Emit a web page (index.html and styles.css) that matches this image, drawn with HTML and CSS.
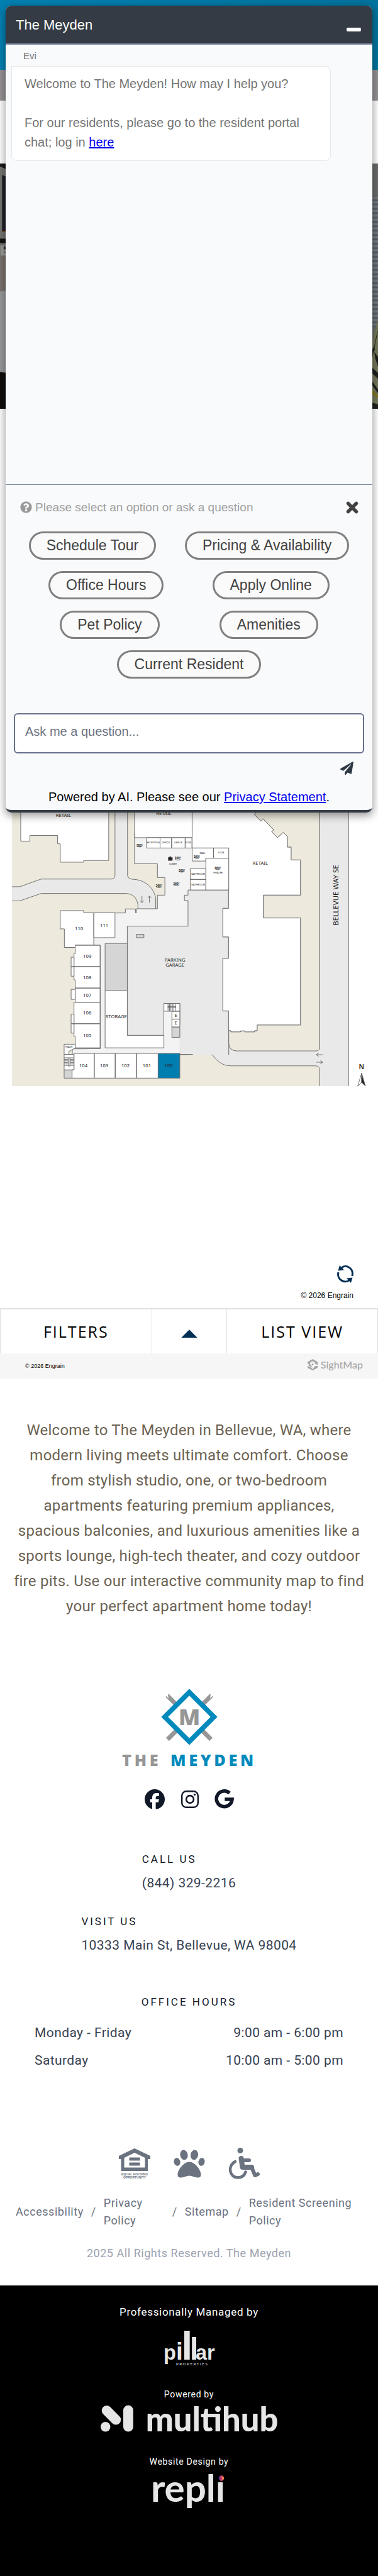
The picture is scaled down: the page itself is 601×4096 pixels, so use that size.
FILE: index.html
```html
<!DOCTYPE html>
<html lang="en">
<head>
<meta charset="utf-8">
<meta name="viewport" content="width=device-width, initial-scale=1">
<title>The Meyden</title>
<link rel="stylesheet" href="styles.css">
</head>
<body>
<header>
  <div class="brand-bar"></div>
  <div class="notice-bar"></div>
  <div class="nav-bar"></div>
</header>

<main>
  <div class="hero">
    <svg class="hero-edge" viewBox="0 0 12 506" preserveAspectRatio="none" aria-hidden="true">
      <rect width="12" height="506" fill="#73736f"/>
      <path d="M0 0h12v12L0 6z" fill="#181818"/>
      <path d="M4 24l8 3v114H4z" fill="#1f2128"/>
      <path d="M4 139h8v2H4z" fill="#8a5a1c"/>
      <path d="M0 155h12v9H0z" fill="#131412"/>
      <path d="M1 169h11v21H1z" fill="#9b9b98"/>
      <path d="M7 171h5v6H7zM8 182h2v2H8z" fill="#30343c"/>
      <path d="M0 192h12v71H0z" fill="#7a726e"/>
      <path d="M0 264l12-2v170l-12-2z" fill="#989a9b"/>
      <path d="M0 430l12 2v74H0z" fill="#0f0e0c"/>
    </svg>
    <svg class="hero-edge" viewBox="0 0 12 506" preserveAspectRatio="none" aria-hidden="true">
      <defs>
        <pattern id="blinds" width="12" height="9" patternUnits="userSpaceOnUse">
          <rect width="12" height="9" fill="#747b80"/>
          <path d="M0 2h12v3H0z" fill="#54595d"/>
        </pattern>
      </defs>
      <rect width="12" height="506" fill="#6a6c6b"/>
      <rect y="68" width="12" height="270" fill="url(#blinds)"/>
      <path d="M12 320L0 372v134h12z" fill="#75795a"/>
      <path d="M0 385l5-8 1 7-6 12zM12 345L1 402v-6L10 350zM5 389l7 10v20l-5-16zM0 420l12 12v12L0 432zM0 448l12 18v8L0 456zM0 493l12 4v9H0z" fill="#1d201c"/>
      <path d="M0 466l12 14v4L0 473z" fill="#86760c"/>
    </svg>
  </div>

  <section class="sitemap" aria-label="Community map">
    <svg class="floor" viewBox="0 0 780 620" role="img" aria-label="Floor 1 plan">
      <g class="plan" transform="scale(.49744 .39541)">
        <path class="land" stroke="none" d="M50 0H1326V1520H50z"/>
        <path class="road" stroke="none" d="M1326 0h120v1520h-120z"/>
        <path fill="none" d="M1446 0v1520M1326 0V1320q-2 14-16 14H980q-30-2-31-38V1230"/>
        <path class="road" stroke="none" d="M746 500h203v796q2 36 31 38h346v80H955c-36-2-56-28-72-55q-4-5-12-5H746z"/>
        <path fill="none" d="M949 1230v66q2 36 31 38h330q14 0 16-14M746 1354h125q8 0 12 5c16 27 36 53 72 55h355q14 2 16 16v90"/>
        <path class="road" stroke="none" d="M477 0h52v420q2 18 20 20c60 2 96 56 97 110v44h-74q4-78-40-80H171L82 553H50v-74h32l89-40h290q14 0 16-16z"/>
        <path fill="none" d="M477 0v423q-2 16-16 16H171l-89 40H50M529 0v420q2 18 20 20c60 2 96 56 97 110v44M50 553h32l89-39h355q40 6 46 56v24"/>
        <path class="room" d="M86 0v241h38v-29h115v43h11v96h97v-9h104V0z"/>
        <path class="hall" d="M558 200v159h95v72h31v92h-31v71h-87v21h-4v-20h-42v21h-131v168h27v540h-56v1h-60v30h480v-660h205V200z"/>
        <path class="road" d="M780 496h169v96h-24v149h24v112h-24v275h24v226H746V1088h-66v167H528V685h252V551h-15v-28h15z"/>
        <path class="road" stroke="none" d="M744 1200h60v152h-57zM800 1220h147v136H800z"/>
        <path class="hall" stroke="none" d="M681 1129h65v219h-65z"/>
        <path class="room" d="M558 0h239v223H558zM797 0H1090l-34 103 26 33 9-12 45 58-9 10 24 31 24-28 17 21v56h16v67h39v184h-154v119h154v559h-180v30h-11v6h-40v-5h-18v5h-40v-6h-10v-104h-24V853h24V741h-24V592h24V277H797z"/>
        <path class="land" d="M1062 0l-2 92-4 11 26 33 9-12 45 58-9 10 24 31 24-28 17 21v56h16v67h39v184h-154v119h154v559h-180v30h-11v6h-40v-5h-18v5h-40v-6h-9v67q2 36 31 38h330q14 0 16-14V0z" />
        <path class="room" d="M608 223h56v54h-56zM664 223h48v54h-48zM712 223h56v54h-56zM768 223h28v54h-28zM797 277h89v53h-32v15h-57zM886 277h63v53h-63zM854 330h95v166h-95zM789 385h65v56h-65zM789 441h65v55h-65z"/>
        <path class="room" d="M250 604h97v11h42v168h-77v13h-45v-97h-17zM389 615h88v130h-88z"/>
        <path class="room" d="M312 785h103v111H307v-68h5zM307 896h108v112H312v-43h-5zM312 1008h103v74H312zM307 1082h108v112H307zM307 1194h108v126H312v-60h-5zM295 847h12v49h-12zM295 896h12v50h-12zM295 1015h17v52h-17zM295 1144h12v50h-12zM295 1194h12v49h-12z"/>
        <path class="shaft" d="M436 775h92v245h-92zM566 727h31v18h-31zM713 1211h33v54h-33zM266 1435h33v43h-33z"/>
        <path class="room" d="M436 1020h92v235h152v65H436z"/>
        <path class="room" d="M680 1088h66v41h-66zM713 1129h33v41h-33zM713 1170h33v41h-33z"/>
        <path class="room" d="M266 1301h46v20l-26 17v16h-20zM266 1354h41v81h-41zM307 1349h84v129h-92v-43h8zM391 1349h87v129h-87zM478 1349h88v129h-88zM566 1349h90v129h-90z"/>
        <path fill="#007eb0" d="M656 1349h90v129h-90z"/>
        <path fill="none" d="M266 1372h18M266 1380h18M266 1388h18M266 1396h18M266 1404h18M266 1412h18M290 1372h16M290 1380h16M290 1388h16M290 1396h16M290 1404h16M290 1412h16M283 1372h7v43h-7zM697 1088v40M703 1088v40M709 1088v40M715 1088v40M721 1088v40M727 1088v40M697 1104h32v7h-32z"/>
        <path fill="none" d="M589 528v34l-7-9M589 562l7-9M620 562v-34l-7 9M620 528l7 9M1338 1356h-26l10-8M1312 1356l10 8M1312 1395h27l-10-8M1339 1395l-10 8"/>
        <path class="ink" d="M698 326h4l2-4h5l2 4h4v16h-17z"/>
        <path fill="#fff" stroke="none" d="M1500 1452l-16 68 16-20z"/>
        <path fill="none" d="M1500 1452l-16 68 16-20z"/>
        <path class="ink" d="M1500 1452l16 68-16-20z"/>
      </g>
      <g class="plan-label">
        <g class="unit">
          <text x="131" y="45">RETAIL</text><text x="338" y="42">RETAIL</text><text x="537" y="144">RETAIL</text>
          <text x="163" y="279">110</text><text x="215" y="273">111</text><text x="180" y="336">109</text><text x="180" y="380">108</text>
          <text x="180" y="417">107</text><text x="180" y="453">106</text><text x="180" y="500">105</text><text x="172" y="562">104</text>
          <text x="215" y="562">103</text><text x="259" y="562">102</text><text x="303" y="562">101</text><text x="348" y="562">100</text>
          <text x="361" y="344">PARKING</text><text x="361" y="354">GARAGE</text><text x="240" y="461">STORAGE</text>
          <text x="363" y="458">E</text><text x="363" y="474">E</text>
        </g>
        <g class="small">
          <text x="316" y="100">RECEPTION</text><text x="342" y="100">OFFICE</text><text x="368" y="100">OFFICE</text><text x="388" y="100">STOR</text>
          <text x="418" y="122">MAIL</text><text x="456" y="121">STOR</text><text x="357" y="144">LOBBY</text><text x="449" y="162">THEATER</text>
          <text x="409" y="165">BATHROOM</text><text x="409" y="187">BATHROOM</text><text x="142" y="522">TRASH</text>
        </g>
        <g class="tour">
          <text x="288" y="106">360°</text><text x="367" y="133">360°</text><text x="406" y="130">360°</text><text x="449" y="153">360°</text>
          <text x="375" y="158">360°</text><text x="364" y="186">360°</text><text x="328" y="190">360°</text>
        </g>
        <g class="orbit">
          <path d="M282 105q6 5 12 0M361 132q6 5 12 0M400 129q6 5 12 0M443 152q6 5 12 0M369 157q6 5 12 0M358 185q6 5 12 0M322 189q6 5 12 0"/>
        </g>
        <text class="street" transform="translate(698 207) rotate(-90)">BELLEVUE WAY SE</text>
        <text class="north" x="746" y="566">N</text>
      </g>
    </svg>
    <div class="map-controls">
      <button class="icon-btn" aria-label="Reset map">
        <svg width="26" height="30" viewBox="0 0 26 30" fill="none" stroke="#002f56" stroke-width="3">
          <path d="M2 12C-1 24 13 31 20 24M24 18C27 6 14-2 7 5"/>
          <path d="M4 1l7 7.500-9.500 1zM22 29l-7-7.500 9.500-1z" fill="#002f56" stroke="none"/>
        </svg>
      </button>
      <small>© 2026 Engrain</small>
    </div>
    <div class="map-tabs">
      <button>FILTERS</button>
      <button aria-label="Expand"><span class="triangle"></span></button>
      <button>LIST VIEW</button>
    </div>
    <div class="map-credit">
      <span>© 2026 Engrain</span>
      <a class="sightmap" href="#">
        <svg width="16" height="18" viewBox="0 0 16 18"><path fill="#a5a5a5" d="M8 0l8 4.500v5L12 7.500A4 4 0 0 0 4 8l4 6-7-4 2-1-3-2v-2.500zM16 11v3l-8 4-8-4v-3l5 2 3 3 4-5z"/><circle cx="8" cy="8.500" r="1.600" fill="#a5a5a5"/></svg>
        SightMap
      </a>
    </div>
  </section>

  <p class="intro">Welcome to The Meyden in Bellevue, WA, where modern living meets ultimate comfort. Choose from stylish studio, one, or two-bedroom apartments featuring premium appliances, spacious balconies, and luxurious amenities like a sports lounge, high-tech theater, and cozy outdoor fire pits. Use our interactive community map to find your perfect apartment home today!</p>
</main>

<footer>
  <div class="contact">
    <a href="#" aria-label="The Meyden home">
      <svg class="logo" width="214" height="130" viewBox="0 0 278 169">
        <g stroke="#969696" stroke-width="9"><path d="M93 14l91 91M185 14l-91 91"/></g>
        <path fill="#fff" d="M85 9l10 3 1 8zM193 9l-10 3-1 8z"/>
        <path d="M139 7.500l51 51-51 51-51-51z" fill="#fff" stroke="#0089bc" stroke-width="10"/>
        <text x="139" y="75" text-anchor="middle" font-size="46" fill="#969696">M</text>
        <text x="0" y="160" font-size="33" letter-spacing="6" fill="#969696">THE</text>
        <text x="100" y="160" font-size="33" letter-spacing="6" fill="#0089bc">MEYDEN</text>
      </svg>
    </a>
    <nav class="social" aria-label="Social media">
      <a href="#" aria-label="Facebook"><svg width="32" height="32" viewBox="0 0 24 24"><path fill="#111827" d="M24 12a12 12 0 1 0-15 11.650V15.600H6.500V12H9v-1.600C9 6.400 10.800 4.500 14.700 4.500c.8 0 2 .15 2.500.3v3.300h-1.400c-1.900 0-2.600.7-2.600 2.600V12h3.900l-.7 3.600h-3.200v8.300A12 12 0 0 0 24 12z"/></svg></a>
      <a href="#" aria-label="Instagram"><svg width="28" height="28" viewBox="0 0 28 28" fill="none" stroke="#111827"><rect x="1.200" y="1.200" width="25.600" height="25.600" rx="7" stroke-width="2.400"/><circle cx="14" cy="14" r="5.900" stroke-width="2.600"/><circle cx="21.500" cy="6.600" r="1.700" fill="#111827" stroke="none"/></svg></a>
      <a href="#" aria-label="Google"><svg width="30" height="31" viewBox="0 0 30 31" fill="none" stroke="#111827" stroke-width="5.600"><path d="M23 6.100A12.400 12.400 0 1 0 27 16H15.300"/></svg></a>
    </nav>
    <div class="contact-block">
      <h2>CALL US</h2>
      <a href="#">(844) 329-2216</a>
    </div>
    <div class="contact-block">
      <h2>VISIT US</h2>
      <a href="#">10333 Main St, Bellevue, WA 98004</a>
    </div>
    <h2 class="hours-title">OFFICE HOURS</h2>
    <dl class="hours">
      <div><dt>Monday - Friday</dt><dd>9:00 am - 6:00 pm</dd></div>
      <div><dt>Saturday</dt><dd>10:00 am - 5:00 pm</dd></div>
    </dl>
  </div>

  <div class="legal">
    <div class="badges">
      <svg width="50" height="50" viewBox="0 0 50 50" fill="#6b7280" role="img" aria-label="Equal housing opportunity">
        <path fill-rule="evenodd" d="M25 1l25 12v5h-4v19H3.500V18H0v-5zM25 8L8.500 16v15.500h33V16z"/>
        <path d="M16.500 15.500h17v5h-17zM16.500 23.500h17v5h-17z"/>
        <text x="25" y="44" text-anchor="middle" font-size="5">EQUAL HOUSING</text>
        <text x="25" y="49" text-anchor="middle" font-size="5">OPPORTUNITY</text>
      </svg>
      <svg width="50" height="50" viewBox="0 0 50 50" fill="#6b7280" role="img" aria-label="Pet friendly">
        <ellipse cx="16.500" cy="11.500" rx="6" ry="8" transform="rotate(-10 16.500 11.500)"/><ellipse cx="33" cy="11.500" rx="6" ry="8" transform="rotate(10 33 11.500)"/>
        <ellipse cx="5.500" cy="22.500" rx="5" ry="6.500" transform="rotate(-14 5.500 22.500)"/><ellipse cx="44.500" cy="22.500" rx="5" ry="6.500" transform="rotate(14 44.500 22.500)"/>
        <path d="M25 22.500c-9 0-18.500 13-18.500 20 0 4 2 5 5 5 5 0 9-3 13.500-3s8.500 3 13.500 3c3 0 5-1 5-5 0-7-9.500-20-18.500-20z"/>
      </svg>
      <svg width="50" height="50" viewBox="0 0 50 50" fill="none" stroke="#6b7280" stroke-linecap="round" stroke-linejoin="round" role="img" aria-label="Wheelchair accessible">
        <circle cx="19" cy="4.500" r="4.500" fill="#6b7280" stroke="none"/>
        <path stroke-width="8" d="M20.500 17l2 14h14.500"/><path stroke-width="6" d="M23 20h10M37 31l5.500 13 4.500-2"/>
        <path stroke-width="4.500" d="M11 22C-2 29 2 47.500 15 47.500c7 0 11-4 12.500-9"/>
      </svg>
    </div>
    <nav class="legal-links" aria-label="Legal">
      <a href="#">Accessibility</a><span>/</span><a href="#">Privacy Policy</a><span>/</span><a href="#">Sitemap</a><span>/</span><a href="#">Resident Screening Policy</a>
    </nav>
    <p>2025 All Rights Reserved. The Meyden</p>
  </div>

  <div class="partners">
    <p>Professionally Managed by</p>
    <a href="#" aria-label="Pillar Properties">
      <svg class="pillar" width="82" height="58" viewBox="0 0 106 75" fill="#e6e6e6">
        <text x="0" y="61" font-size="42">p</text><text x="26" y="61" font-size="50">i</text><text x="37" y="61" font-size="82">l</text><text x="54" y="61" font-size="64">l</text><text x="66" y="61" font-size="42">ar</text>
        <text class="sub" x="26" y="72" font-size="8" letter-spacing="2">PROPERTIES</text>
      </svg>
    </a>
    <p class="tiny">Powered by</p>
    <a href="#" aria-label="Multihub">
      <svg class="multihub" width="282" height="44" viewBox="0 0 366 57" fill="#e6e6e6">
        <circle cx="10" cy="45" r="10"/>
        <path d="M12.500 11.500L31.500 30.500M57 11v34" fill="none" stroke="#e6e6e6" stroke-width="20.500" stroke-linecap="round"/>
        <text x="93" y="54" font-size="68">multihub</text>
      </svg>
    </a>
    <p class="tiny">Website Design by</p>
    <a href="#" aria-label="Repli">
      <svg class="repli" width="115" height="58" viewBox="0 0 149 75" fill="#e6e6e6">
        <defs><linearGradient id="dot"><stop offset="0" stop-color="#3a2a86"/><stop offset=".6" stop-color="#e8476a"/><stop offset="1" stop-color="#f6a53c"/></linearGradient></defs>
        <text x="-4" y="59" font-size="78">repl&#305;</text>
        <circle cx="141" cy="11" r="5.500" fill="url(#dot)"/>
      </svg>
    </a>
  </div>
</footer>

<aside class="chat" aria-label="The Meyden chat">
  <div class="chat-head">
    <span>The Meyden</span>
    <button class="minimize" aria-label="Minimize chat"></button>
  </div>
  <div class="chat-log">
    <span class="sender">Evi</span>
    <div class="bubble">
      <p>Welcome to The Meyden! How may I help you?</p>
      <p>For our residents, please go to the resident portal chat; log in <a href="#">here</a></p>
    </div>
  </div>
  <div class="chat-options">
    <div class="hint">
      <svg width="19" height="19" viewBox="0 0 512 512" fill="#9a9a9a"><path d="M504 256a248 248 0 1 1-496 0 248 248 0 0 1 496 0zM262.700 90c-54.500 0-89.300 23-116.500 63.800-3.500 5.300-2.400 12.400 2.700 16.300l34.700 26.300c5.200 3.900 12.600 3 16.700-2.100 17.800-22.600 30.100-35.800 57.300-35.800 20.400 0 45.700 13.100 45.700 33 0 15-12.400 22.700-32.500 34C247.100 238.500 216 254.900 216 296v4a12 12 0 0 0 12 12h56a12 12 0 0 0 12-12v-1.300c0-28.500 83.200-29.600 83.200-106.700 0-58-60.200-102-116.500-102zM256 338a46 46 0 1 0 0 92 46 46 0 0 0 0-92z"/></svg>
      <span>Please select an option or ask a question</span>
      <button class="icon-btn close" aria-label="Close options"><svg width="20" height="20" viewBox="0 0 20 20"><path d="M3.500 3.500l13 13M16.500 3.500l-13 13" stroke="#424242" stroke-width="5.500" stroke-linecap="round"/></svg></button>
    </div>
    <div class="choices"><button>Schedule Tour</button><button>Pricing &amp; Availability</button></div>
    <div class="choices"><button>Office Hours</button><button>Apply Online</button></div>
    <div class="choices"><button>Pet Policy</button><button>Amenities</button></div>
    <div class="choices"><button>Current Resident</button></div>
  </div>
  <form class="chat-form">
    <textarea aria-label="Ask me a question" placeholder="Ask me a question..."></textarea>
    <button type="button" class="icon-btn send" aria-label="Send"><svg width="21" height="21" viewBox="0 0 512 512" fill="#2f3943"><path d="M476 3.200L12.500 270.600c-18.100 10.400-15.800 35.600 2.200 43.200L121 358.400l287.300-253.200c5.500-4.900 13.300 2.600 8.600 8.300L176 407v80.500c0 23.600 28.500 32.900 42.500 15.800L282 426l124.600 52.200c14.200 6 30.400-2.900 33-18.200l72-432C515 7.800 493.300-6.800 476 3.200z"/></svg></button>
  </form>
  <p class="powered">Powered by AI. Please see our <a href="#">Privacy Statement</a>.</p>
</aside>
</body>
</html>
```
FILE: styles.css
```css
* { box-sizing: border-box; }
body {
  margin: 0;
  position: relative;
  background: #fff;
  font-family: Roboto, "Liberation Sans", sans-serif;
  color: #374151;
}
p, h2, dl, dd { margin: 0; }
svg { display: block; overflow: visible; }
a { color: inherit; text-decoration: none; }
button { font: inherit; color: inherit; background: none; border: 0; padding: 0; }

/* page top */
.brand-bar { height: 111px; background: linear-gradient(90deg, #0081b3, #00749f); }
.notice-bar { height: 49px; background: #969295; }
.nav-bar { height: 100px; }
.hero { display: flex; justify-content: space-between; height: 390px; background: #6a6a68; }
.hero-edge { width: 10px; height: 100%; overflow: hidden; }

/* site map */
.sitemap { padding-top: 614px; }
.floor { width: 100%; overflow: hidden; }
.plan { stroke: #6e6e6e; stroke-width: 1; }
.plan path { vector-effect: non-scaling-stroke; }
.land { fill: #ede9dd; }
.road { fill: #e9e9e9; }
.hall { fill: #f3f3f3; }
.room { fill: #fff; }
.shaft { fill: #d5d5d5; }
.ink { fill: #222; }
.plan-label { font-family: "Noto Sans", sans-serif; text-anchor: middle; fill: #222; }
.unit { font-size: 10px; }
.small { font-size: 5px; }
.tour { font-size: 6px; font-weight: 700; }
.orbit { fill: none; stroke: #222; stroke-width: 1; }
.street { font-size: 15px; }
.north { font-size: 14px; font-weight: 600; }
.map-controls {
  display: flex; flex-direction: column; align-items: flex-end; gap: 11px;
  padding: 269px 39px 12px;
}
.map-controls small { font: 12px/16px "Liberation Sans", sans-serif; color: #000; }
.map-tabs {
  display: grid; grid-template-columns: 2fr 1fr 2fr;
  border: solid #e0e0e0; border-width: 2px 1px 0;
  height: 72px;
  font: 25px/34px "Open Sans", sans-serif; letter-spacing: 2px; color: #000;
}
.map-tabs button { letter-spacing: inherit; }
.map-tabs button + button { border-left: 1px solid #e0e0e0; }
.triangle {
  display: block; width: 26px; height: 13px; margin: 8px auto 0;
  background: #002f56; clip-path: polygon(50% 0, 100% 100%, 0 100%);
}
.map-credit {
  display: flex; align-items: center; justify-content: space-between;
  height: 40px; padding: 0 24px 0 40px;
  background: #f6f6f6; font: 9px/12px "Liberation Sans", sans-serif; color: #000;
}
.sightmap { display: flex; align-items: center; gap: 5px; padding-bottom: 4px; font: 500 16px/20px Lato, sans-serif; color: #a5a5a5; }

.intro {
  padding: 62px 20px 0;
  font-size: 24px; line-height: 40px; letter-spacing: .01em;
  text-align: center; color: #6c6353;
}

/* footer */
.contact { display: flex; flex-direction: column; align-items: center; padding-top: 111px; }
.logo { font-family: "Open Sans", sans-serif; font-weight: 800; }
.social { display: flex; align-items: center; gap: 26px; margin: 30px 0 67px; }
.contact h2 { font-size: 17px; font-weight: 400; line-height: 24px; letter-spacing: 3px; color: #111827; }
.contact-block { display: grid; gap: 11px; margin-bottom: 33px; font-size: 21px; line-height: 31px; letter-spacing: .02em; }
.contact .hours-title { margin-top: 29px; }
.hours { width: 100%; padding: 15px 55px 0; font-size: 21px; line-height: 44px; letter-spacing: .02em; }
.hours div { display: flex; justify-content: space-between; }

.legal { padding: 117px 25px 37px; font-size: 18px; line-height: 28px; letter-spacing: .03em; color: #6b7280; }
.badges { display: flex; justify-content: center; gap: 37px; }
.badges text { font-family: "Liberation Sans", sans-serif; font-weight: 700; letter-spacing: 0; }
.legal-links { display: flex; align-items: center; gap: 12px; margin-top: 24px; }
.legal p { margin-top: 24px; text-align: center; color: #9ca3af; }

.partners {
  display: flex; flex-direction: column; align-items: center;
  min-height: 464px; padding-top: 30px;
  background: #000; color: #fff; font-size: 17px; line-height: 24px; letter-spacing: .04em;
}
.pillar { margin: 17px 0 32px; font-family: "Liberation Sans Narrow", "Liberation Sans", sans-serif; font-weight: 700; letter-spacing: 0; }
.pillar .sub { font-family: Lato, sans-serif; font-weight: 400; }
.partners .tiny { font-size: 14px; }
.multihub { margin: 5px 0 34px; font-family: Lato, sans-serif; font-weight: 900; letter-spacing: 0; }
.repli { margin-top: 6px; font-family: Lato, sans-serif; font-weight: 700; letter-spacing: 0; }

/* chat widget, lies over the page */
.chat {
  position: absolute; top: 8px; left: 8px; right: 8px;
  border: 1px solid transparent; border-radius: 10px;
  background: #f9fafc; background-clip: padding-box;
  box-shadow: 0 4px 14px rgba(0, 0, 0, .4);
  font-family: "Liberation Sans", Arial, sans-serif; font-size: 20px; line-height: 31px;
}
.chat-head {
  display: flex; align-items: center; justify-content: space-between;
  height: 62px; padding: 0 18px 0 16px;
  border-radius: 9px 9px 0 0; border-bottom: 2px solid #7c839f;
  background: #343b44; color: #fff; font-size: 22px;
}
.minimize { width: 23px; height: 6px; margin-top: 16px; border-radius: 2px; background: #fff; }
.chat-log { height: 700px; padding: 8px 66px 0 9px; color: #757575; border-bottom: 1px solid #7c87a2; }
.sender { display: block; padding: 0 19px; font-size: 15px; line-height: 20px; margin-bottom: 6px; }
.bubble {
  display: grid; gap: 31px;
  padding: 12px 18px 13px 20px;
  border: 1px solid #e3e8e9; border-radius: 0 9px 9px 9px; background: #fff;
}
.chat a { color: #00e; text-decoration: underline; }
.hint { display: flex; align-items: center; gap: 5px; padding: 20px 22px 14px 23px; font-size: 19px; color: #a0a0a0; }
.close { margin-left: auto; }
.choices { display: flex; justify-content: space-evenly; }
.choices button {
  height: 45px; margin: 9px; padding: 0 25px;
  border: 3px solid #808080; border-radius: 23px; background: #fafafa;
  color: #424242; font-size: 23px;
}
.chat-form { display: flex; flex-direction: column; align-items: flex-end; gap: 13px; padding: 46px 13px 0; }
.chat-form textarea {
  width: 100%; height: 64px; padding: 12px 16px; resize: none;
  border: 2px solid #66708c; border-radius: 6px; background: #fff;
  font: inherit; color: #424242;
}
.chat-form textarea::placeholder { color: #6b7280; opacity: 1; }
.send { margin-right: 17px; }
.powered { padding: 20px 0 5px; border-bottom: 4px solid #343b44; border-radius: 0 0 9px 9px; text-align: center; color: #000; }
```
